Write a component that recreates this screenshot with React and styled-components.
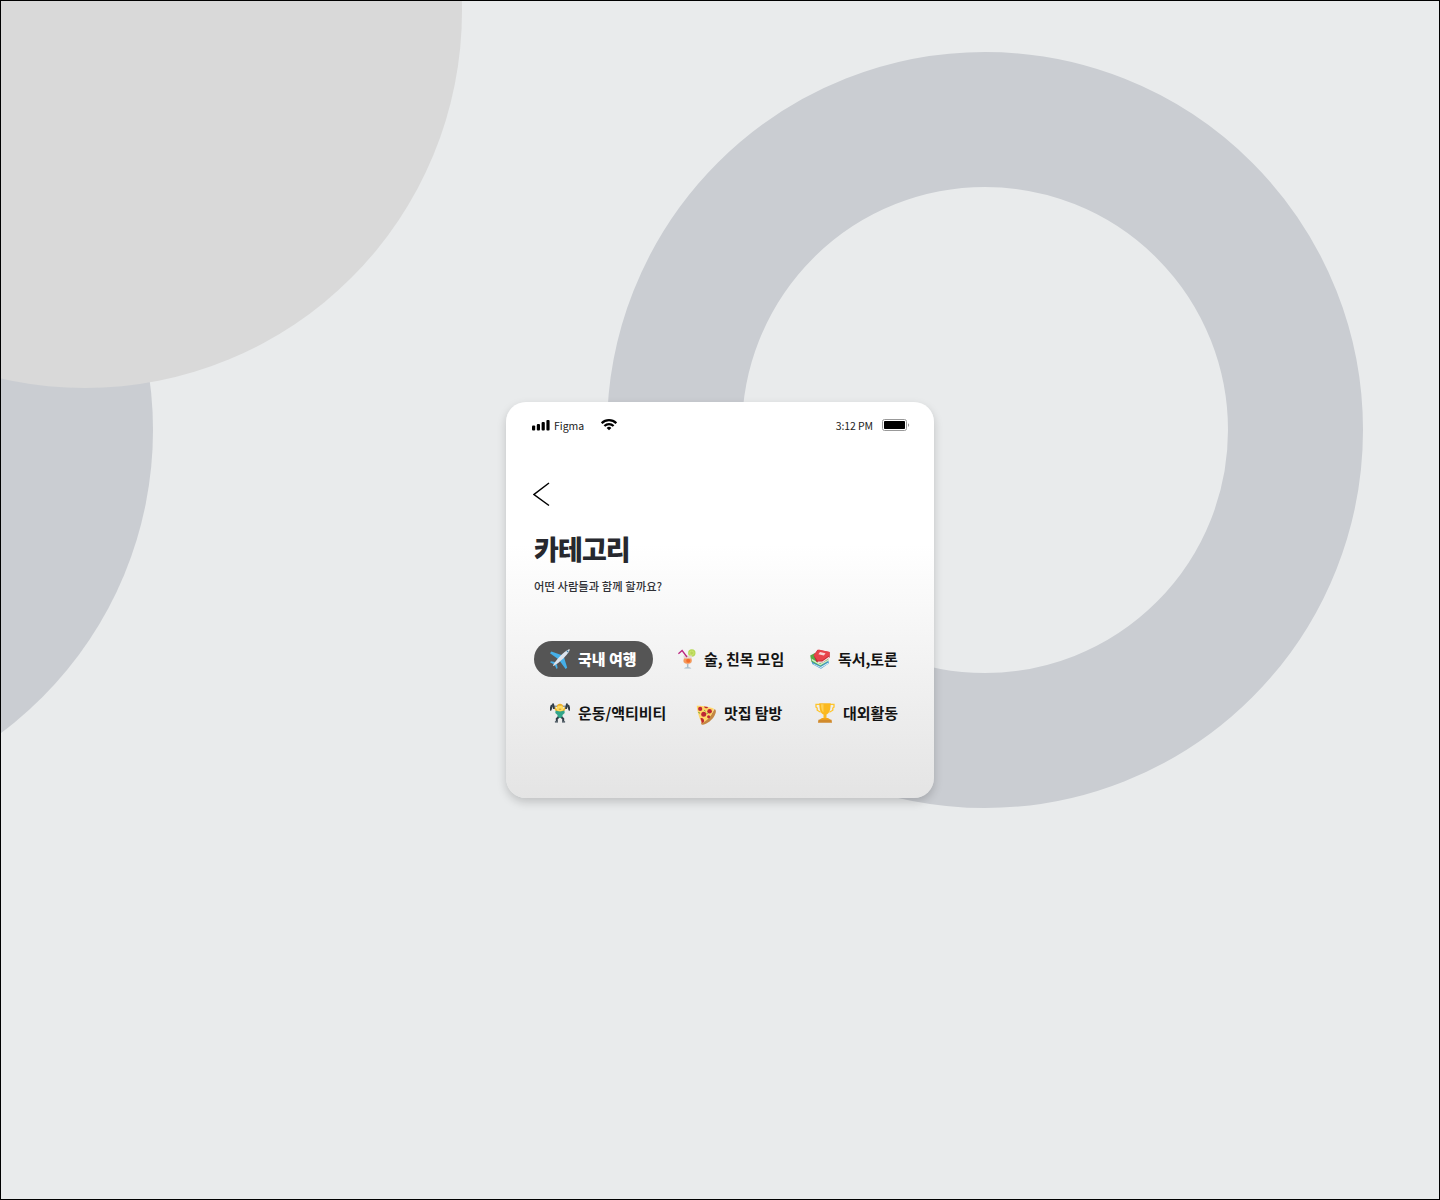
import React from "react";
import styled, { createGlobalStyle } from "styled-components";

const GlobalStyle = createGlobalStyle`
  *, *::before, *::after { box-sizing: border-box; }
  body {
    margin: 0;
    font-family: "Noto Sans CJK KR", "Noto Sans", sans-serif;
    color: #000;
  }
`;

const Stage = styled.main`
  position: relative;
  width: 1440px;
  height: 1200px;
  display: flex;
  align-items: center;
  justify-content: center;
  overflow: hidden;
  background: #e9ebec;

  &::after {
    content: "";
    position: absolute;
    inset: 0;
    border: 1px solid #000;
    pointer-events: none;
  }
`;

const Circle = styled.div`
  position: absolute;
  left: ${(p) => p.$x - p.$r}px;
  top: ${(p) => p.$y - p.$r}px;
  width: ${(p) => p.$r * 2}px;
  height: ${(p) => p.$r * 2}px;
  border-radius: 50%;
  background: ${(p) => p.$fill || "transparent"};
  border: ${(p) => (p.$ring ? `${p.$ring}px solid #cacdd2` : "none")};
`;

const Card = styled.section`
  position: relative;
  width: 428px;
  height: 396px;
  padding: 15px 24px 0 28px;
  display: flex;
  flex-direction: column;
  align-items: flex-start;
  border-radius: 20px;
  background: linear-gradient(180deg, #fff 0%, #fff 36%, #e4e4e4 100%);
  box-shadow: 0 4px 10px rgba(0, 0, 0, 0.18);
`;

const StatusBar = styled.header`
  width: 378px;
  height: 16px;
  display: flex;
  align-items: center;
  margin-left: -2px;
`;

const StatusText = styled.span`
  padding-top: 2px;
  font-size: 10.5px;
  line-height: 16px;
  letter-spacing: ${(p) => p.$spacing || "0"};
  color: #222;
  white-space: nowrap;
`;

const StatusGroup = styled.div`
  display: flex;
  align-items: center;
  gap: ${(p) => p.$gap}px;
  margin-left: ${(p) => p.$offset || "0"};
`;

const BackButton = styled.button`
  display: flex;
  margin: 49px 0 0 -1px;
  padding: 0;
  border: 0;
  background: none;
`;

const Title = styled.h1`
  margin: 22px 0 0;
  font-size: 27px;
  font-weight: 900;
  line-height: 40px;
  letter-spacing: -0.9px;
  color: #27282e;
  white-space: nowrap;
`;

const Subtitle = styled.p`
  margin: 8px 0 0;
  font-size: 11.3px;
  font-weight: 500;
  line-height: 18px;
  word-spacing: 0.2px;
  color: #303136;
  white-space: nowrap;
`;

const Categories = styled.div`
  margin-top: 46px;
  display: flex;
  flex-direction: column;
  gap: 18px;
`;

const CategoryRow = styled.div`
  display: flex;
  gap: ${(p) => p.$gap}px;
  padding-left: ${(p) => p.$indent || 0}px;
`;

const Category = styled.button`
  width: ${(p) => p.$width}px;
  height: 36px;
  padding: 0 0 0 ${(p) => (p.$active ? 16 : 0)}px;
  display: flex;
  align-items: center;
  flex: none;
  gap: ${(p) => p.$gap || 8}px;
  border: 0;
  border-radius: 18px;
  background: ${(p) => (p.$active ? "#555" : "none")};
  color: ${(p) => (p.$active ? "#fff" : "#141414")};
  font-family: inherit;
  font-size: 15px;
  font-weight: ${(p) => (p.$active ? 900 : 700)};
  line-height: 24px;
  letter-spacing: -0.05px;
  white-space: nowrap;
`;

const CategoryLabel = styled.span`
  padding-bottom: 1px;
`;

const Icon = styled.svg`
  width: ${(p) => p.$w || 20}px;
  height: ${(p) => p.$h || 20}px;
  margin-top: ${(p) => p.$drop || 0}px;
  flex: none;
  display: block;
`;

const Signal = () => (
  <Icon $w={18} $h={11} viewBox="0 0 18 11">
    <rect x="0" y="5.6" width="3.2" height="4.9" rx="1" />
    <rect x="4.8" y="4" width="3.2" height="6.5" rx="1" />
    <rect x="9.6" y="2" width="3.2" height="8.5" rx="1" />
    <rect x="14.4" y="0" width="3.2" height="10.5" rx="1" />
  </Icon>
);

const Wifi = () => (
  <Icon $w={16} $h={12} viewBox="0 0 16 12">
    <path d="M.7 4.1a10.5 10.5 0 0 1 14.6 0M3.4 7a6.6 6.6 0 0 1 9.2 0" fill="none" stroke="#000" strokeWidth="2.2" />
    <path d="M5.6 8.9a3.5 3.5 0 0 1 4.8 0L8 11.3Z" />
  </Icon>
);

const Battery = () => (
  <Icon $w={28} $h={12} viewBox="0 0 28 12">
    <rect x=".5" y=".5" width="24" height="11" rx="2" fill="#fff" stroke="#999" />
    <rect x="2" y="2" width="21" height="8" rx=".8" />
    <path d="M26 4.2c1.6.5 1.6 3.1 0 3.6Z" fill="#999" />
  </Icon>
);

const Back = () => (
  <Icon $w={18} $h={25} viewBox="0 0 18 25">
    <path d="M16 1 1 12.5 16 23.5" fill="none" stroke="#000" strokeWidth="1.5" />
  </Icon>
);

const Plane = () => (
  <Icon viewBox="0 0 20 20">
    <path d="M12 6.2 1.4 2.6 0 4.3 8.7 10.5ZM14 8.2 17.2 18.8 15.6 20 9.4 11.4Z" fill="#45afe8" />
    <path d="M5 13.1 1 12.3 0 13.3 4.1 15.4ZM6.9 15 7.6 19 6.6 20 4.6 15.9Z" fill="#45afe8" />
    <path d="M3 17c.4-2.3 4.8-7.5 8.5-11.2C14.6 2.8 18.3.1 19.7.3c.3 1.6-2.3 5-5.2 7.9C10.9 11.8 5.2 16.7 3 17Z" fill="#dbe3ed" />
    <path d="m16.4 2.1 1.5 1.5.7-1.2-.9-.9Z" fill="#38799d" />
  </Icon>
);

const Drink = () => (
  <Icon viewBox="0 0 20 20">
    <circle cx="13.8" cy="4" r="3.7" fill="#b6d957" />
    <circle cx="13.8" cy="4" r="2.5" fill="#cfe675" />
    <path d="m13.8 1.6v4.8m-2.2-3.6 4.4 2.5m0-2.5-4.4 2.5" stroke="#b0cf4e" strokeWidth=".6" />
    <path d="M5.3 6.5h8.7l-.5 3.5c1.5 2.8-.2 5.3-3.8 5.3S4.4 12.8 6 10Z" fill="#e6d9d2" />
    <path d="M5.9 9.5h7.5l.3 2.3c.1 2-1.8 3-4 3s-4.2-1-4.2-2.8Z" fill="#f69858" />
    <circle cx="10.2" cy="11.7" r="2" fill="#f36e2b" />
    <path d="m.4 4.8 3.7-3.3L9 8" fill="none" stroke="#bb2680" strokeWidth="1.3" />
    <path d="M9.7 15v3.5" stroke="#a7bdc9" strokeWidth="1.5" />
    <path d="M6.1 19.6c.3-1.8 6.9-1.8 7.2 0Z" fill="#a5bbc8" />
  </Icon>
);

const Books = () => (
  <Icon viewBox="0 0 20 20">
    <path d="m1.4 12.4 6-3 11.2 2.8.4 2-8 5.6-8.4-4.6Z" fill="#3e97c9" />
    <path d="m3 14.6 7.6 3.4 7.8-4.6.2 1.2-7.7 4.4-7.3-3.4Z" fill="#e3f2f5" />
    <path d="M.2 6.6 5 4l14 7-8.4 6L1.4 12.4Z" fill="#56ac46" />
    <path d="m1.4 9.6 8.7 5.2 8.6-4.6.2 1.4-8.6 4.9-8.2-4.7Z" fill="#cdebc8" />
    <path d="M3.6 6.2 7.6.8l12 2.2.2 5.4-7.6 5.4-5.6-.8Z" fill="#c5232f" />
    <path d="m7.6 12.6 4.6-.1 7-5 .2 1.4-7 4.8-4.2.2Z" fill="#f3dfe0" />
    <path d="M3.6 6.2 8.6.4l11 2.6-.4 3.4-7 5-4.6.4Z" fill="#e8444b" />
    <path d="m10 3.1 5.5 1.2-1.6 2.2-5.5-1.3Z" fill="#f8d4d4" />
  </Icon>
);

const Lifter = () => (
  <Icon viewBox="0 0 20 20">
    <path d="M1.5 3.2h17" stroke="#68737a" />
    <path d="m4.6 4.5 2.5 3.8h5.8l2.5-3.8" stroke="#f1ba31" strokeWidth="2" fill="none" />
    <path d="M5.6 7.6c2 1 6.8 1 8.8 0l.3 2.3-2.2 2V15h-5v-3.1l-2.2-2Z" fill="#32a589" />
    <path d="M6.8 18.3v-2.5l1.7-1.6M13.2 18.3v-2.5l-1.7-1.6" stroke="#333f49" strokeWidth="2" fill="none" />
    <path d="M4.9 19.6v-1.4H8v1.4M12 19.6v-1.4h3.1v1.4" fill="#374550" />
    <circle cx="10" cy="5" r="3.2" fill="#ffdc5d" />
    <path d="M6.8 4.2C6.4-.3 13.6-.3 13.2 4.2L12 2.8H8.2Z" fill="#edae26" />
    <path d="M8.8 6.2h2.4" stroke="#b37828" strokeWidth=".7" />
    <g fill="#303d46">
      <rect x=".2" y="1.6" width="2.2" height="6" rx=".8" transform="rotate(16 1 4)" />
      <rect x="2.4" y=".4" width="2" height="5.8" rx=".8" transform="rotate(-12 3 3)" />
      <rect x="17.6" y="1.6" width="2.2" height="6" rx=".8" transform="rotate(-16 19 4)" />
      <rect x="15.6" y=".4" width="2" height="5.8" rx=".8" transform="rotate(12 17 3)" />
    </g>
  </Icon>
);

const Pizza = () => (
  <Icon $drop={3} viewBox="0 0 20 20">
    <path d="M18.3 4.3c2.1.1 2 3.1.3 6.2-2.3 4.5-7.1 8.2-11.5 9.2-2 .4-2.7-1.4-1.2-2.6C12 14.3 15.4 10.2 18.3 4.3Z" fill="#c48643" />
    <path d="M.8.8c4.2-.3 12.5 1 17.1 2.9-1.4 6-6 11.4-12 14.7C3.7 14.2 1 6.5.8.8Z" fill="#ffd768" />
    <g fill="#be2734">
      <circle cx="4.2" cy="3.9" r="2.1" />
      <circle cx="13.6" cy="6.3" r="2.3" />
      <circle cx="7.7" cy="9.3" r="2.5" />
      <path d="M4.5 13.1c2.5-.5 4.2 1.4 3.4 3.8l-2 1.3Z" />
      <path d="M8 1.4l4 .6c-.3 2-3.7 1.4-4-.6Z" />
      <circle cx="12.6" cy="11.7" r="1.5" />
    </g>
    <path d="m2.4 7.5 1.7.7m4.1-3 1.3 1m1 2.2 1.4-.3" stroke="#689e45" strokeWidth="1" />
  </Icon>
);

const Trophy = () => (
  <Icon viewBox="0 0 20 20">
    <path d="M5 1.4H1v2.8l1.2.8v2.2l3.4 2M15 1.4h4v2.8l-1.2.8v2.2l-3.4 2" fill="none" stroke="#ffc52b" strokeWidth="1.3" />
    <path d="M4.3.2h11.4c0 6.5-1.4 10.2-4.2 11.2v4h-3v-4c-2.8-1-4.2-4.7-4.2-11.2Z" fill="#fbb91f" />
    <path d="M6 1.2h2.5v8.4C6.8 8.1 6 5.3 6 1.2Z" fill="#ffd155" />
    <path d="M7 15h6l3 2H4Z" fill="#f4a51a" />
    <path d="M3.4 16.8h13.2l.4 3H3Z" fill="#d18a2c" />
  </Icon>
);

const rows = [
  {
    gap: 25,
    indent: 0,
    items: [
      { label: "국내 여행", icon: <Plane />, width: 119, active: true },
      { label: "술, 친목 모임", icon: <Drink />, width: 107, gap: 6 },
      { label: "독서,토론", icon: <Books />, width: 88 },
    ],
  },
  {
    gap: 30,
    indent: 16,
    items: [
      { label: "운동/액티비티", icon: <Lifter />, width: 116 },
      { label: "맛집 탐방", icon: <Pizza />, width: 89 },
      { label: "대외활동", icon: <Trophy />, width: 83 },
    ],
  },
];

export default function App() {
  return (
    <>
      <GlobalStyle />
      <Stage>
        <Circle $x={-225} $y={430} $r={378} $fill="#cacdd2" />
        <Circle $x={85} $y={11} $r={377} $fill="#d9d9d9" />
        <Circle $x={985} $y={430} $r={378} $ring={135} />
        <Card>
          <StatusBar>
            <StatusGroup $gap={4}>
              <Signal />
              <StatusText>Figma</StatusText>
            </StatusGroup>
            <StatusGroup $gap={0} $offset="17px">
              <Wifi />
            </StatusGroup>
            <StatusGroup $gap={9} $offset="auto">
              <StatusText $spacing="-0.1px">3:12 PM</StatusText>
              <Battery />
            </StatusGroup>
          </StatusBar>
          <BackButton aria-label="뒤로">
            <Back />
          </BackButton>
          <Title>카테고리</Title>
          <Subtitle>어떤 사람들과 함께 할까요?</Subtitle>
          <Categories>
            {rows.map((row, i) => (
              <CategoryRow key={i} $gap={row.gap} $indent={row.indent}>
                {row.items.map((c) => (
                  <Category key={c.label} $width={c.width} $active={c.active} $gap={c.gap}>
                    {c.icon}
                    <CategoryLabel>{c.label}</CategoryLabel>
                  </Category>
                ))}
              </CategoryRow>
            ))}
          </Categories>
        </Card>
      </Stage>
    </>
  );
}
